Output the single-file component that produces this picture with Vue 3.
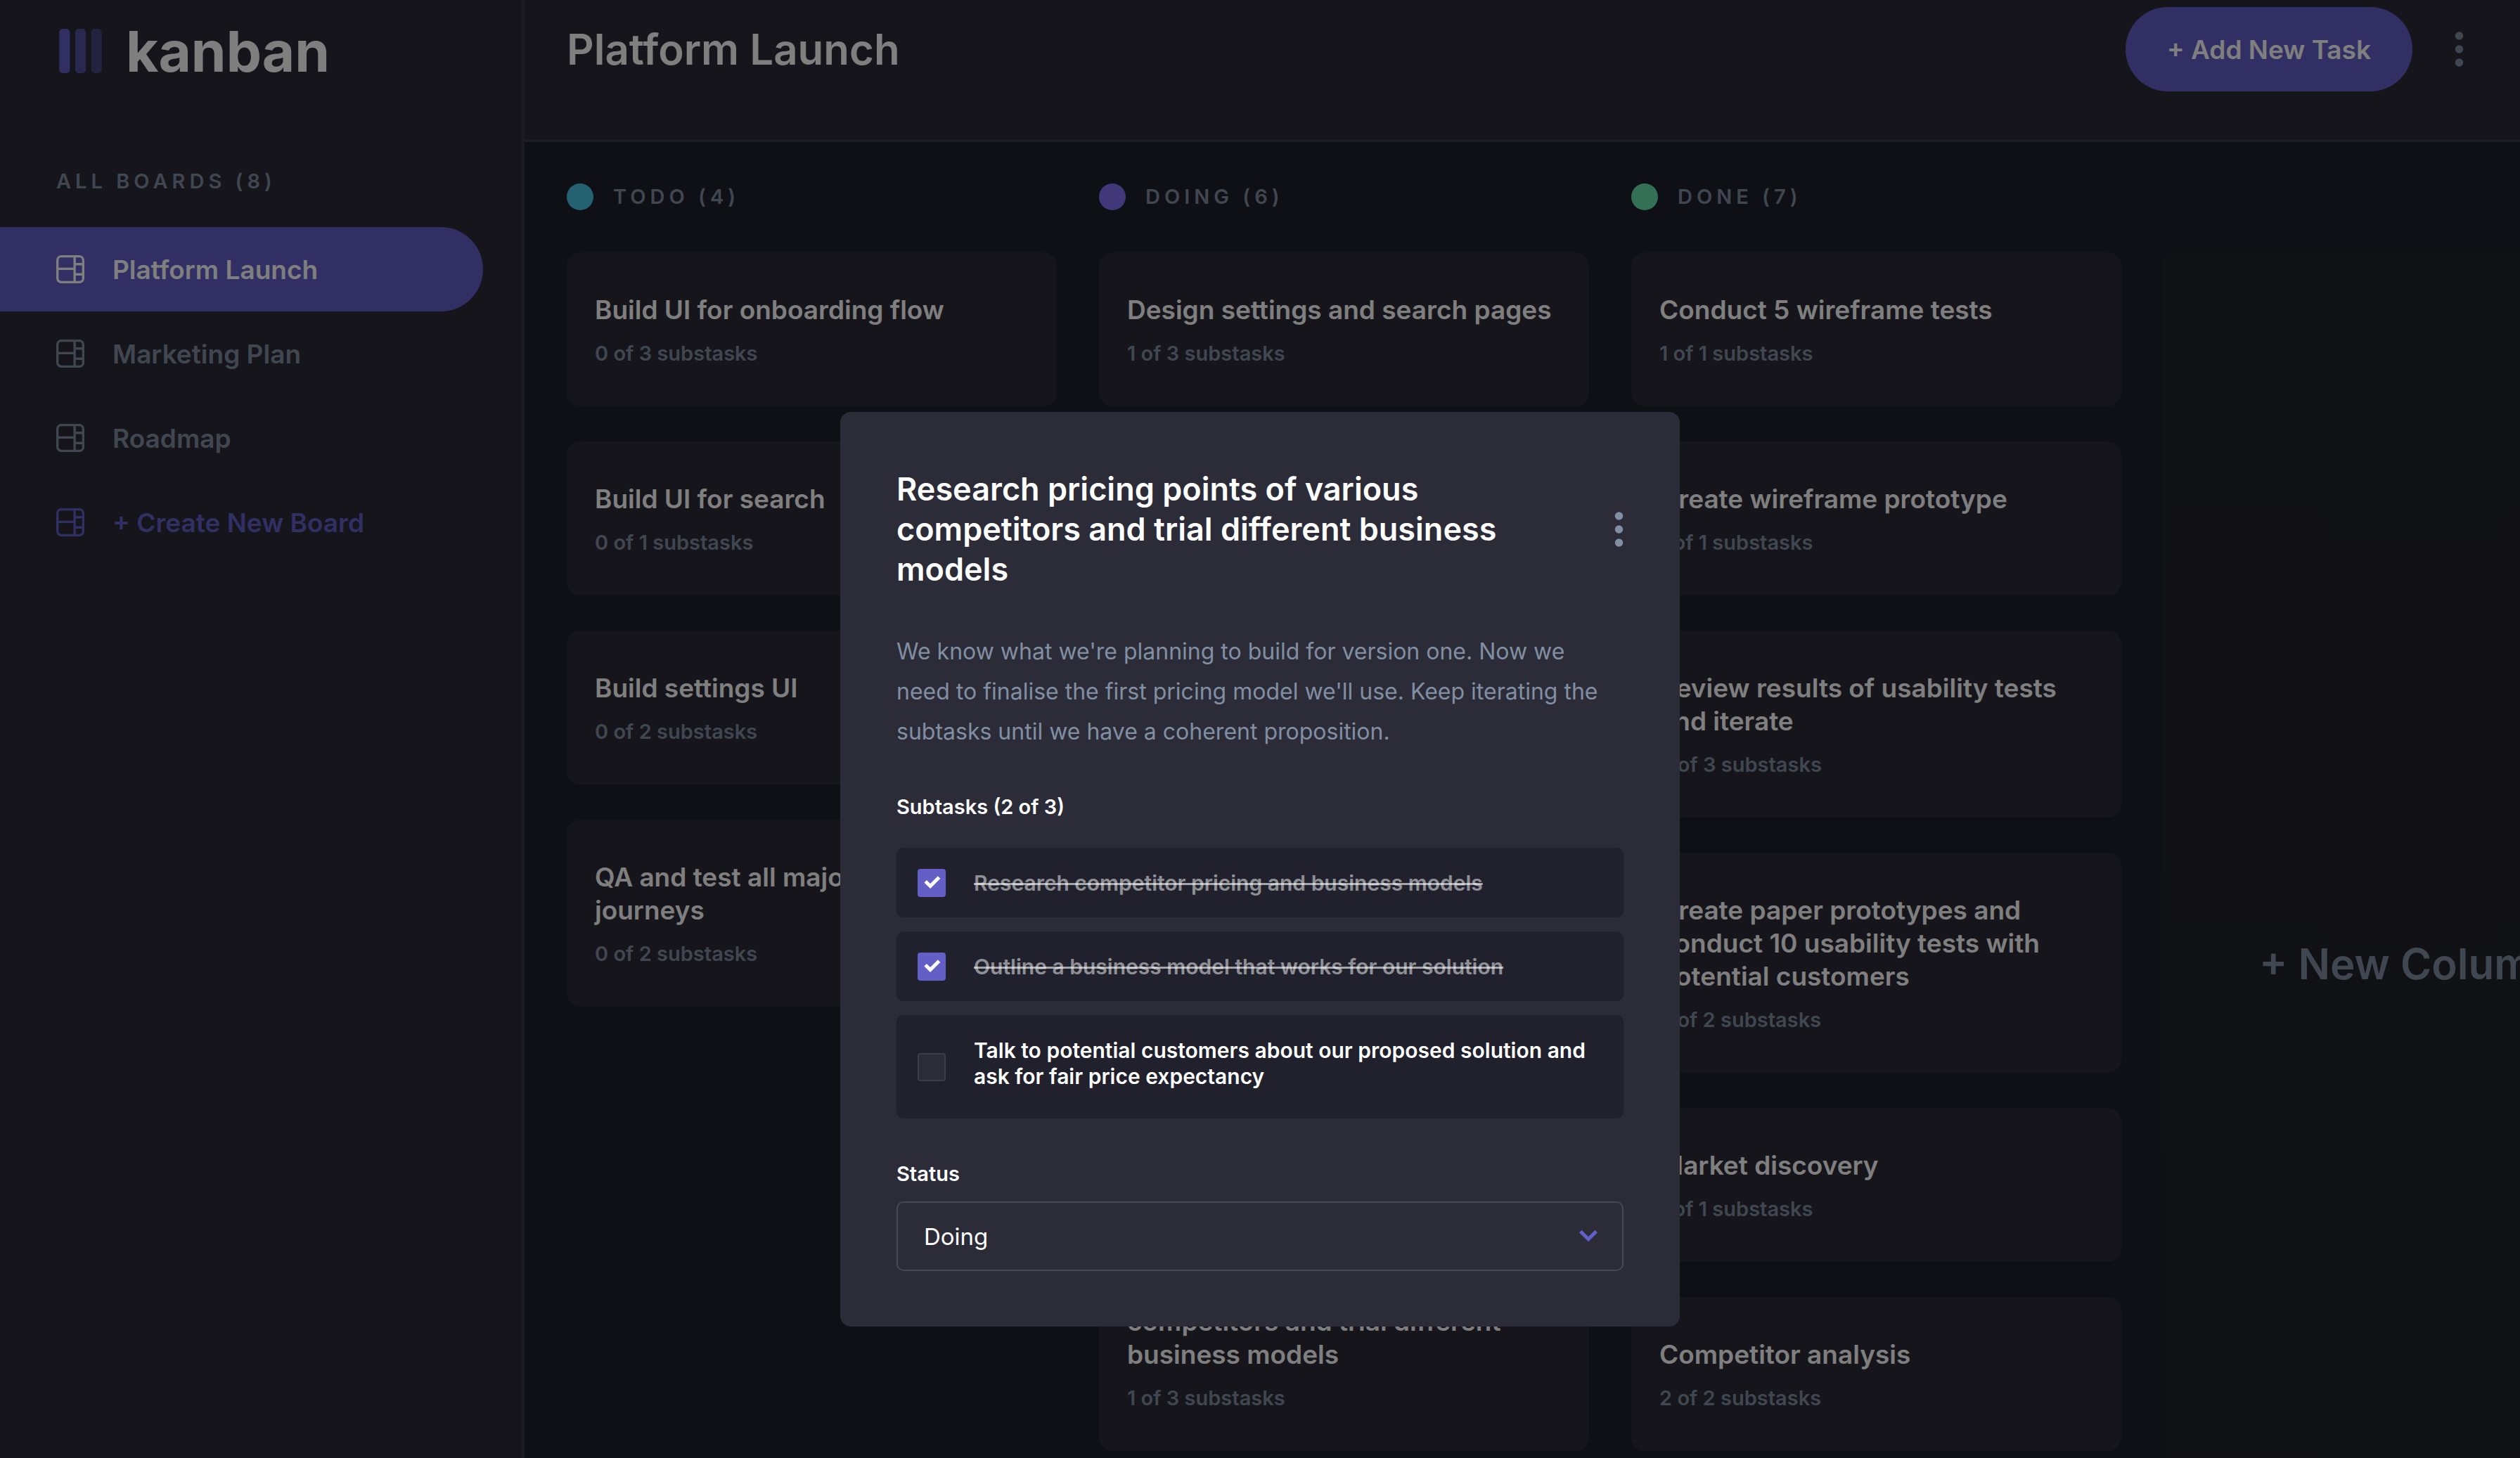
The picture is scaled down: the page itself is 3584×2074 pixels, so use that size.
<script setup>
import { ref } from 'vue'

const boards = ref([
  { name: 'Platform Launch', active: true },
  { name: 'Marketing Plan' },
  { name: 'Roadmap' },
])

const columns = ref([
  {
    name: 'TODO',
    tone: 'cyan',
    tasks: [
      { title: 'Build UI for onboarding flow', done: 0, total: 3 },
      { title: 'Build UI for search', done: 0, total: 1 },
      { title: 'Build settings UI', done: 0, total: 2 },
      { title: 'QA and test all major user journeys', done: 0, total: 2 },
    ],
  },
  {
    name: 'DOING',
    tone: 'violet',
    tasks: [
      { title: 'Design settings and search pages', done: 1, total: 3 },
      { title: 'Add account management endpoints', done: 2, total: 3 },
      { title: 'Design onboarding flow', done: 1, total: 3 },
      { title: 'Add search endpoints', done: 1, total: 2 },
      { title: 'Add authentication endpoints', done: 1, total: 2 },
      { title: 'Research pricing points of various competitors and trial different business models', done: 1, total: 3 },
    ],
  },
  {
    name: 'DONE',
    tone: 'green',
    tasks: [
      { title: 'Conduct 5 wireframe tests', done: 1, total: 1 },
      { title: 'Create wireframe prototype', done: 1, total: 1 },
      { title: 'Review results of usability tests and iterate', done: 3, total: 3 },
      { title: 'Create paper prototypes and conduct 10 usability tests with potential customers', done: 2, total: 2 },
      { title: 'Market discovery', done: 1, total: 1 },
      { title: 'Competitor analysis', done: 2, total: 2 },
      { title: 'Research the market', done: 2, total: 2 },
    ],
  },
])

const subtasks = ref([
  { title: 'Research competitor pricing and business models', done: true },
  { title: 'Outline a business model that works for our solution', done: true },
  { title: 'Talk to potential customers about our proposed solution and ask for fair price expectancy', done: false },
])

const status = ref('Doing')

const boardIcon =
  'M0 2.889A2.889 2.889 0 0 1 2.889 0H13.11A2.889 2.889 0 0 1 16 2.889V13.11A2.888 2.888 0 0 1 13.111 16H2.89A2.889 2.889 0 0 1 0 13.111V2.89Zm1.333 5.555v4.667c0 .859.697 1.556 1.556 1.556h6.889V8.444H1.333Zm8.445-1.333V1.333h-6.89A1.556 1.556 0 0 0 1.334 2.89V7.11h8.445Zm4.889-1.333H11.11v4.444h3.556V5.778Zm0 5.778H11.11v3.11h2a1.556 1.556 0 0 0 1.556-1.555v-1.555Zm0-7.112V2.89a1.555 1.555 0 0 0-1.556-1.556h-2v3.111h3.556Z'
</script>

<template>
  <div class="app">
    <aside class="sidebar">
      <div class="brand">
        <svg class="brand-mark" viewBox="0 0 24 25" aria-hidden="true">
          <rect width="6" height="25" rx="2" fill="#635fc7" />
          <rect x="9" width="6" height="25" rx="2" fill="#635fc7" opacity=".75" />
          <rect x="18" width="6" height="25" rx="2" fill="#635fc7" opacity=".5" />
        </svg>
        <span class="brand-name">kanban</span>
      </div>
      <h2 class="overline">ALL BOARDS (8)</h2>
      <nav class="boards">
        <a v-for="b in boards" :key="b.name" href="#" class="board-link" :class="{ active: b.active }">
          <svg class="board-icon" viewBox="0 0 16 16" aria-hidden="true"><path :d="boardIcon" fill="currentColor" /></svg>
          {{ b.name }}
        </a>
        <button type="button" class="board-link create">
          <svg class="board-icon" viewBox="0 0 16 16" aria-hidden="true"><path :d="boardIcon" fill="currentColor" /></svg>
          + Create New Board
        </button>
      </nav>
    </aside>

    <main class="main">
      <header class="topbar">
        <h1 class="board-title">Platform Launch</h1>
        <div class="actions">
          <button type="button" class="add-task">+ Add New Task</button>
          <button type="button" class="more" aria-label="Board options">
            <svg class="dots" viewBox="0 0 5 20" aria-hidden="true">
              <circle cx="2.5" cy="2.4" r="2.3" /><circle cx="2.5" cy="10" r="2.3" /><circle cx="2.5" cy="17.6" r="2.3" />
            </svg>
          </button>
        </div>
      </header>

      <div class="columns">
        <section v-for="c in columns" :key="c.name" class="column">
          <h2 class="column-head overline">
            <span class="dot" :class="c.tone"></span>{{ c.name }} ({{ c.tasks.length }})
          </h2>
          <article v-for="t in c.tasks" :key="t.title" class="card">
            <h3 class="card-title">{{ t.title }}</h3>
            <p class="card-meta">{{ t.done }} of {{ t.total }} substasks</p>
          </article>
        </section>
        <button type="button" class="new-column">+ New Column</button>
      </div>
    </main>

    <div class="overlay">
      <div class="modal" role="dialog" aria-modal="true" aria-labelledby="task-title">
        <div class="modal-head">
          <h2 id="task-title" class="modal-title">Research pricing points of various competitors and trial different business models</h2>
          <button type="button" class="more" aria-label="Task options">
            <svg class="dots" viewBox="0 0 5 20" aria-hidden="true">
              <circle cx="2.5" cy="2.4" r="2.3" /><circle cx="2.5" cy="10" r="2.3" /><circle cx="2.5" cy="17.6" r="2.3" />
            </svg>
          </button>
        </div>
        <p class="description">
          We know what we're planning to build for version one. Now we need to finalise the first pricing model we'll use. Keep iterating the subtasks until we have a coherent proposition.
        </p>
        <fieldset class="subtasks">
          <legend class="label">Subtasks (2 of 3)</legend>
          <label v-for="s in subtasks" :key="s.title" class="subtask" :class="{ done: s.done }">
            <span class="tick">
              <input v-model="s.done" type="checkbox" class="checkbox" />
              <svg v-if="s.done" class="tick-mark" viewBox="0 0 10 8" aria-hidden="true">
                <path d="m1.276 3.066 2.756 2.756 5-5" fill="none" stroke="#fff" stroke-width="2" />
              </svg>
            </span>
            <span class="subtask-text">{{ s.title }}</span>
          </label>
        </fieldset>
        <label class="label" for="status">Status</label>
        <div class="select-wrap">
          <select id="status" v-model="status" class="select">
            <option>Todo</option>
            <option>Doing</option>
            <option>Done</option>
          </select>
          <svg class="chevron" viewBox="0 0 11 8" aria-hidden="true">
            <path d="m1 1 4.5 4.5L10 1" fill="none" stroke="#635fc7" stroke-width="2" />
          </svg>
        </div>
      </div>
    </div>
  </div>
</template>

<style>
body {
  background: #1f202a;
}
</style>

<style scoped>
.app {
  position: relative;
  display: flex;
  height: 100vh;
  overflow: hidden;
  background: #1f202a;
  color: #fff;
  font-family: Inter, "Liberation Sans", sans-serif;
  font-weight: 600;
}

h1, h2, h3, p {
  margin: 0;
  font-weight: inherit;
}

button {
  padding: 0;
  border: 0;
  background: none;
  color: inherit;
  font: inherit;
  cursor: pointer;
}

.overline {
  color: #828fa3;
  font-size: 29px;
  line-height: 38px;
  letter-spacing: 6px;
}

/* Sidebar */
.sidebar {
  box-sizing: border-box;
  flex: none;
  width: 746px;
  padding-top: 41px;
  border-right: 4px solid #363741;
  background: #2b2b36;
}

.brand {
  display: flex;
  align-items: center;
  gap: 34px;
  height: 63px;
  padding-left: 84px;
}

.brand-mark {
  width: 61px;
  height: 63px;
}

.brand-name {
  font-size: 80px;
  font-weight: 700;
  line-height: 63px;
}

.sidebar > .overline {
  padding: 135px 0 46px 80px;
}

.boards {
  display: flex;
  flex-direction: column;
  padding-right: 55px;
}

.board-link {
  display: flex;
  align-items: center;
  gap: 40px;
  height: 120px;
  padding-left: 80px;
  border-radius: 0 60px 60px 0;
  color: #828fa3;
  font-size: 37px;
  text-decoration: none;
}

.board-link.active {
  background: #635fc7;
  color: #fff;
}

.board-link.create {
  color: #635fc7;
}

.board-icon {
  width: 40px;
  height: 40px;
}

/* Top bar */
.main {
  flex: 1;
  min-width: 0;
}

.topbar {
  display: flex;
  justify-content: space-between;
  padding: 10px 80px 69px 60px;
  border-bottom: 3px solid #3a3b46;
  background: #2b2b36;
}

.board-title {
  font-size: 60px;
  line-height: 120px;
}

.actions {
  display: flex;
  align-items: center;
  gap: 60px;
}

.add-task {
  height: 120px;
  padding: 0 59px;
  border-radius: 60px;
  background: #635fc7;
  font-size: 37px;
}

.more {
  flex: none;
  color: #828fa3;
  line-height: 0;
}

.dots {
  width: 13px;
  height: 50px;
  fill: currentColor;
}

/* Columns */
.columns {
  display: flex;
  gap: 60px;
  padding: 59px 60px 0;
}

.column,
.new-column {
  flex: none;
  width: 697px;
}

.column-head {
  display: flex;
  align-items: center;
  gap: 28px;
  margin-bottom: 60px;
}

.dot {
  width: 38px;
  height: 38px;
  border-radius: 50%;
}

.cyan { background: #49c4e5; }
.violet { background: #8471f2; }
.green { background: #67e2ae; }

.card {
  margin-bottom: 50px;
  padding: 58px 40px 57px;
  border-radius: 20px;
  background: #2b2b36;
}

.card-title {
  font-size: 37px;
  line-height: 47px;
}

.card-meta {
  margin-top: 20px;
  color: #828fa3;
  font-size: 29px;
  line-height: 37px;
}

.new-column {
  margin-top: 98px;
  border-radius: 15px;
  background: linear-gradient(#23242d, #20212a);
  color: #828fa3;
  font-size: 60px;
}

/* Task dialog */
.overlay {
  position: absolute;
  inset: 0;
  display: flex;
  align-items: flex-start;
  justify-content: center;
  padding-top: 586px;
  background: rgba(0, 0, 0, 0.5);
}

.modal {
  box-sizing: border-box;
  width: 1194px;
  padding: 81px 80px 79px;
  border-radius: 15px;
  background: #2b2c37;
}

.modal-head {
  display: flex;
  align-items: center;
  justify-content: space-between;
  gap: 80px;
}

.modal-title {
  font-size: 45px;
  line-height: 57px;
}

.description {
  margin: 60px 0;
  padding-right: 20px;
  color: #828fa3;
  font-size: 32px;
  font-weight: 400;
  line-height: 57px;
}

.label {
  display: block;
  padding: 0;
  font-size: 29px;
  line-height: 37px;
}

.subtasks {
  display: flex;
  flex-direction: column;
  gap: 20px;
  min-width: 0;
  margin: 0 0 60px;
  padding: 0;
  border: 0;
}

.subtasks .label {
  margin-bottom: 40px;
}

.subtask {
  display: flex;
  align-items: center;
  gap: 40px;
  padding: 0 30px;
  border-radius: 10px;
  background: #20212c;
  font-size: 30px;
  line-height: 37px;
}

.tick {
  position: relative;
  flex: none;
  width: 40px;
  height: 40px;
}

.checkbox {
  display: block;
  box-sizing: border-box;
  width: 40px;
  height: 40px;
  margin: 0;
  border: 2px solid #3c3d49;
  border-radius: 4px;
  background: #2b2c37;
  appearance: none;
}

.checkbox:checked {
  border-color: #635fc7;
  background: #635fc7;
}

.tick-mark {
  position: absolute;
  inset: 0;
  width: 25px;
  height: 20px;
  margin: auto;
  pointer-events: none;
}

.subtask-text {
  padding: 32px 0 41px;
}

.done .subtask-text {
  padding-bottom: 30px;
  color: rgba(255, 255, 255, 0.5);
  text-decoration: line-through 3px rgba(255, 255, 255, 0.6);
}

.select-wrap {
  position: relative;
  margin-top: 21px;
}

.select {
  display: block;
  box-sizing: border-box;
  width: 100%;
  height: 99px;
  padding: 0 37px;
  border: 2px solid #484954;
  border-radius: 10px;
  background: #2b2c37;
  color: #fff;
  font-family: inherit;
  font-size: 33px;
  font-weight: 400;
  appearance: none;
}

.chevron {
  position: absolute;
  top: 0;
  bottom: 0;
  right: 36px;
  width: 28px;
  height: 20px;
  margin: auto 0;
  pointer-events: none;
}
</style>
